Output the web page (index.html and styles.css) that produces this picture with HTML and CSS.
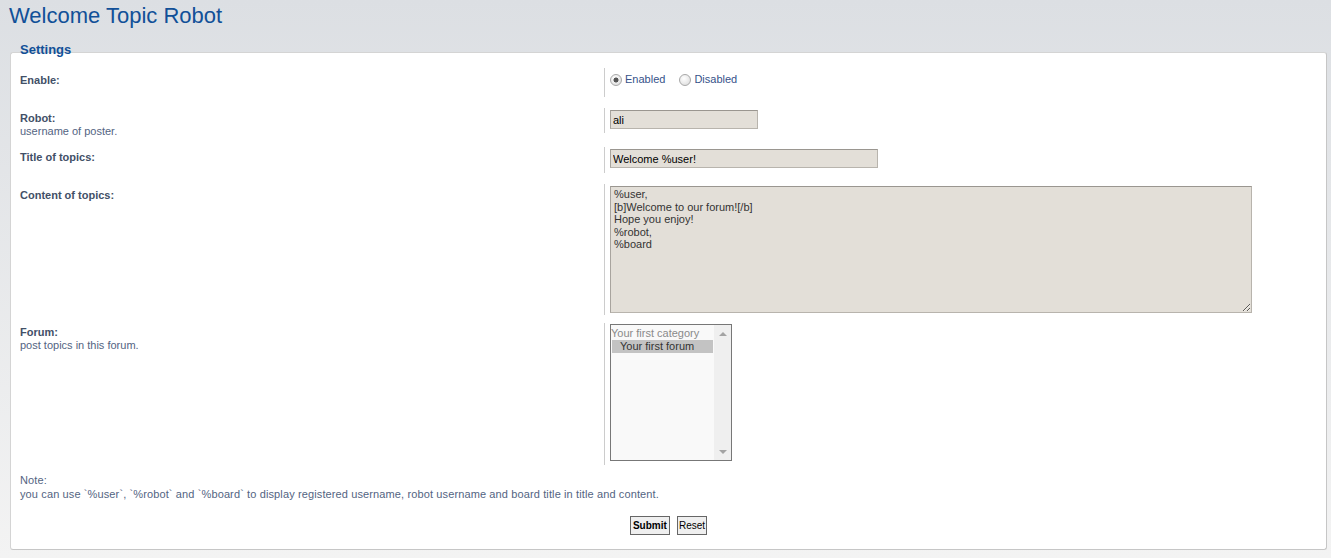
FILE: index.html
```html
<!DOCTYPE html>
<html lang="en">
<head>
  <meta charset="UTF-8" />
  <title>Welcome Topic Robot</title>
  <link rel="stylesheet" href="styles.css">
</head>
<body>
  <h1 class="page-title">Welcome Topic Robot</h1>

  <form class="settings-form">
    <div class="legend">Settings</div>
    <div class="settings">
      <dl class="row row-enable">
        <dt><label>Enable:</label></dt>
        <dd>
          <label class="radio"><input type="radio" name="enable" checked> Enabled</label>
          <label class="radio"><input type="radio" name="enable"> Disabled</label>
        </dd>
      </dl>
      <dl class="row row-robot">
        <dt><label for="robot">Robot:</label><br><span class="explain">username of poster.</span></dt>
        <dd><input id="robot" class="text short" type="text" value="ali"></dd>
      </dl>
      <dl class="row row-title">
        <dt><label for="title">Title of topics:</label></dt>
        <dd><input id="title" class="text medium" type="text" value="Welcome %user!"></dd>
      </dl>
      <dl class="row row-content">
        <dt><label for="content">Content of topics:</label></dt>
        <dd><textarea id="content" class="content">%user,
[b]Welcome to our forum![/b]
Hope you enjoy!
%robot,
%board</textarea></dd>
      </dl>
      <dl class="row row-forum">
        <dt><label>Forum:</label><br><span class="explain">post topics in this forum.</span></dt>
        <dd>
          <div class="listbox">
            <div class="options">
              <div class="opt group">Your first category</div>
              <div class="opt selected">Your first forum</div>
            </div>
            <div class="scrollbar">
              <span class="arrow up"></span>
              <span class="arrow down"></span>
            </div>
          </div>
        </dd>
      </dl>

      <div class="note">
        Note:<br>
        you can use `%user`, `%robot` and `%board` to display registered username, robot username and board title in title and content.
      </div>

      <div class="buttons">
        <button type="button" class="btn submit">Submit</button>
        <button type="button" class="btn">Reset</button>
      </div>
    </div>
  </form>
</body>
</html>
```

FILE: styles.css
```css
html {
  background: linear-gradient(#dcdfe3, #f3f3f3 558px);
  min-height: 100%;
}
body {
  margin: 0;
  padding: 0 4px 0 10px;
  font-family: "Liberation Sans", Arial, sans-serif;
  font-size: 11px;
  color: #536482;
}
.page-title {
  margin: 0 0 0 -1px;
  padding-top: 3px;
  font-size: 22px;
  line-height: 26px;
  font-weight: normal;
  color: #115098;
}
.legend {
  margin: 13px 0 0 10px;
  font-size: 13px;
  line-height: 16px;
  font-weight: bold;
  color: #115098;
  position: relative;
  z-index: 1;
}
.settings {
  margin-top: -6px;
  background: #fff;
  border: 1px solid #d4d4d4;
  border-right-color: #c6c6c6;
  border-bottom-color: #c6c6c6;
  border-radius: 3px;
  padding: 15px 9px 14px 9px;
}
.row {
  display: flex;
  align-items: flex-start;
  margin: 0 0 11px 0;
}
.row dt {
  width: 584px;
  flex: none;
  padding-top: 4px;
  line-height: 13px;
}
.row dt label {
  font-weight: bold;
  color: #425067;
}
.row dd {
  flex: 1;
  margin: 0;
  border-left: 1px solid #ccc;
  padding: 2px 0 4px 5px;
}
.row-enable dt {
  padding-top: 6px;
}
.row-enable dd {
  display: flex;
  align-items: flex-start;
  padding: 5px 0 11px 5px;
}
.radio {
  display: flex;
  align-items: center;
  height: 13px;
  line-height: 13px;
  margin-right: 14px;
  color: #36528a;
}
.radio input {
  appearance: none;
  width: 12px;
  height: 12px;
  margin: 0 3px 0 0;
  border: 1px solid #a8a8a8;
  border-radius: 50%;
  background: radial-gradient(circle at 40% 35%, #fff, #d8d8d8);
}
.radio input:checked {
  background: radial-gradient(circle, #555 0, #555 2.2px, transparent 2.8px), radial-gradient(circle at 40% 35%, #fff, #d8d8d8);
}
.row-robot {
  margin-bottom: 9px;
}
.row-title dd {
  padding-bottom: 5px;
}
.text, .content {
  box-sizing: border-box;
  margin: 0;
  height: 19px;
  padding: 0 2px;
  font-family: "Liberation Sans", Arial, sans-serif;
  font-size: 11px;
  color: #000;
  background: #e3dfd8;
  border: 1px solid #b8b4ad;
  border-top-color: #9a9690;
  border-left-color: #a8a49e;
  display: block;
}
.short {
  width: 148px;
}
.medium {
  width: 268px;
}
.content {
  width: 642px;
  height: 127px;
  padding: 1px 3px;
  line-height: 12.6px;
  color: #333;
}
.row-content {
  margin-bottom: 8px;
}
.row-content dt {
  padding-top: 5px;
}
.row-content dd {
  padding-bottom: 2px;
}
.row-forum {
  margin-bottom: 8px;
}
.row-forum dt {
  padding-top: 3px;
}
.row-forum dd {
  padding-top: 1px;
}
.listbox {
  display: flex;
  box-sizing: border-box;
  width: 122px;
  height: 137px;
  border: 1px solid #777;
  background: #f9f9f9;
}
.options {
  flex: 1;
  padding: 2px 1px 0 0;
  font-size: 11px;
  line-height: 13px;
}
.opt.group {
  color: #8a8a8a;
}
.opt.selected {
  margin-left: 1px;
  padding-left: 8px;
  background: #c3c3c3;
  color: #333;
}
.scrollbar {
  width: 17px;
  background: #efefef;
  display: flex;
  flex-direction: column;
  justify-content: space-between;
  align-items: center;
  padding: 7px 0 6px;
}
.arrow {
  width: 0;
  height: 0;
  border-left: 4px solid transparent;
  border-right: 4px solid transparent;
}
.arrow.up {
  border-bottom: 4px solid #a3a3a3;
}
.arrow.down {
  border-top: 4px solid #a3a3a3;
}
.note {
  line-height: 14px;
  letter-spacing: 0.12px;
}
.buttons {
  text-align: center;
  margin-top: 15px;
}
.btn {
  font-family: "Liberation Sans", Arial, sans-serif;
  font-size: 10px;
  height: 19px;
  padding: 0 1px;
  margin: 0 2px;
  border: 1px solid #666;
  background: #efefef;
  color: #000;
}
.btn.submit {
  font-weight: bold;
  padding: 0 2px;
}
```
